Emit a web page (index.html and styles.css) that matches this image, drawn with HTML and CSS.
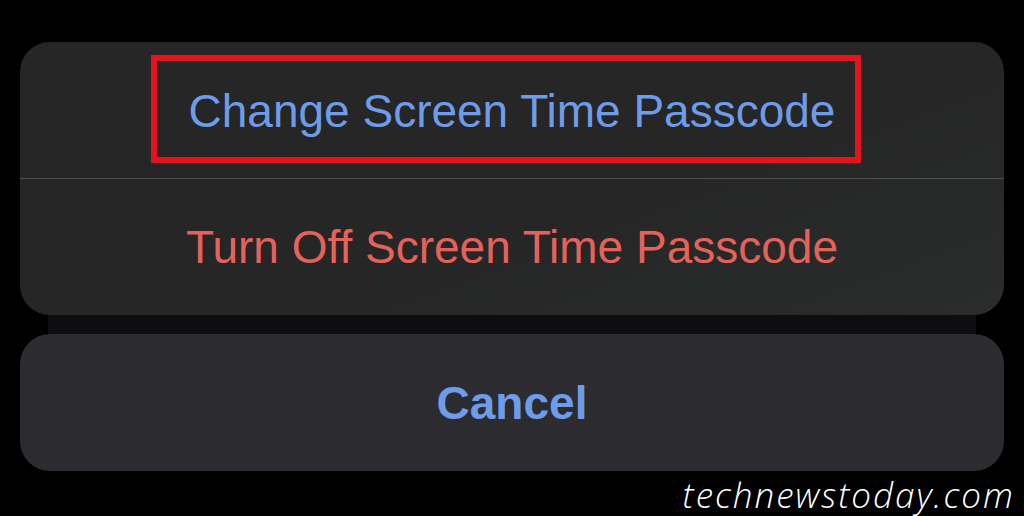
FILE: index.html
```html
<!DOCTYPE html>
<html>
<head>
    <title>Screen Time Passcode</title>
    <link rel="stylesheet" href="styles.css">
</head>
<body>
    <div class="sheet">
        <div class="group">
            <div class="row">
                <span class="highlight action">Change Screen Time Passcode</span>
            </div>
            <div class="separator"></div>
            <div class="row">
                <span class="action destructive">Turn Off Screen Time Passcode</span>
            </div>
        </div>
        <div class="gap"></div>
        <div class="cancel">
            <span class="action bold">Cancel</span>
        </div>
    </div>
    <div class="watermark">technewstoday.com</div>
</body>
</html>
```

FILE: styles.css
```css
body {
    margin: 0;
    height: 516px;
    background: #000;
    font-family: "Liberation Sans", Arial, sans-serif;
    overflow: hidden;
    position: relative;
}

.sheet {
    padding: 42px 20px 0;
}

.group {
    background: linear-gradient(160deg, #262627 0%, #262627 60%, #2a2d2b 100%);
    border-radius: 30px;
    height: 273px;
    display: flex;
    flex-direction: column;
}

.row {
    height: 136px;
    display: flex;
    justify-content: center;
    align-items: center;
}

.separator {
    height: 1px;
    background: #4e4e50;
}

.action {
    font-size: 46px;
    color: #6e9ce9;
}

.highlight {
    display: inline-block;
    box-sizing: border-box;
    height: 108px;
    line-height: 100px;
    padding: 0 20px 0 32px;
    margin-right: 12px;
    margin-top: -2px;
    border: 6px solid #e3141b;
}

.destructive {
    color: #e5625b;
}

.gap {
    height: 19px;
    margin: 0 28px;
    background: #0d0d12;
}

.cancel {
    background: #2c2b2f;
    border-radius: 30px;
    height: 137px;
    display: flex;
    justify-content: center;
    align-items: center;
}

.bold {
    font-weight: bold;
}

.watermark {
    position: absolute;
    right: 9px;
    bottom: -2px;
    font-family: "Open Sans", sans-serif;
    font-style: italic;
    font-weight: 300;
    font-size: 35px;
    letter-spacing: 2px;
    color: #fff;
}
```
